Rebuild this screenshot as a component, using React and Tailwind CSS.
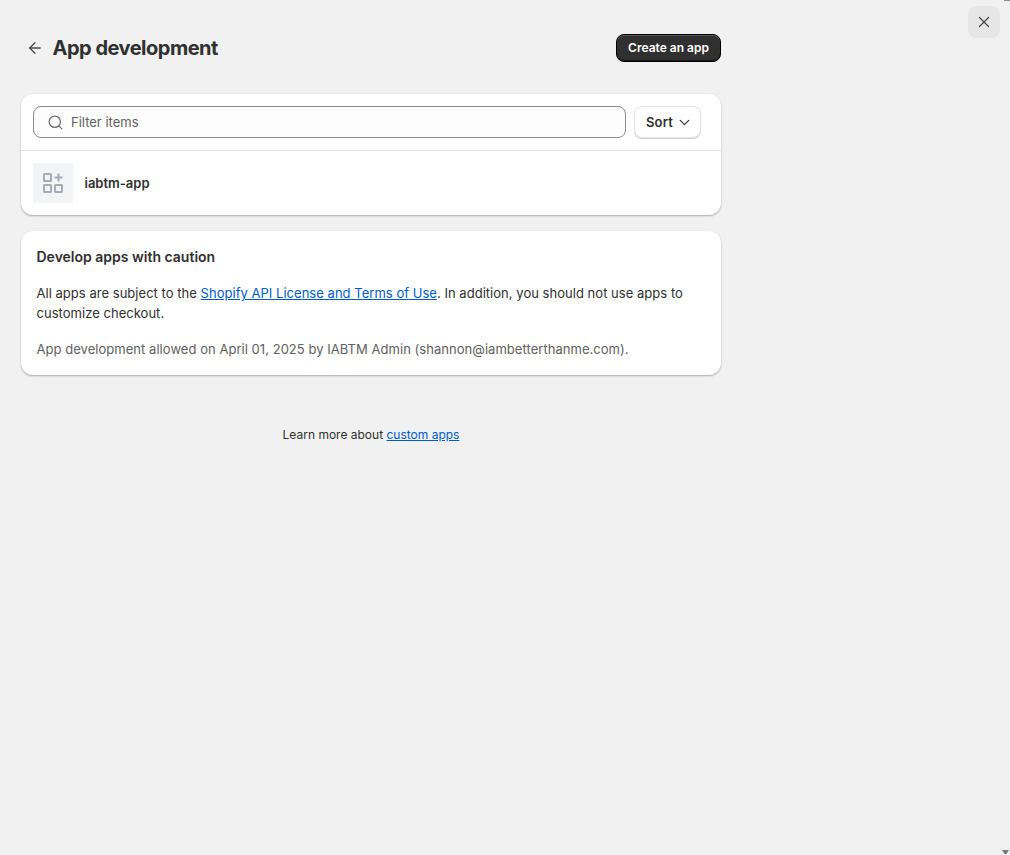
import { ArrowLeft, Search, ChevronDown, X } from 'lucide-react'

const AppIcon = () => (
  <svg width="20" height="20" viewBox="0 0 20 20" fill="none" stroke="#a4acb8" strokeWidth="2">
    <rect x="1" y="1" width="7" height="7" rx="0.5" />
    <rect x="1" y="12" width="7" height="7" rx="0.5" />
    <rect x="12" y="12" width="7" height="7" rx="0.5" />
    <path d="M15.5 0.5v8M11.5 4.5h8" />
  </svg>
)

const App = () => {
  return (
    <div className="relative h-[855px] overflow-hidden bg-[#f1f1f1] font-['Inter',sans-serif] text-[13px] font-normal text-[#303030] flex justify-between pl-[21px] pr-[10px]">
      <div className="w-[700px] pt-[34px]">
        <div className="flex items-center justify-between h-[28px] mb-[32px]">
          <div className="flex items-center">
            <ArrowLeft className="w-[18px] h-[18px] ml-[5px] mr-[8.5px] text-[#4a4a4a]" strokeWidth={1.7} />
            <h1 className="text-[20px] leading-[28px] font-bold tracking-[-0.5px]">App development</h1>
          </div>
          <button className="h-[28px] w-[105px] rounded-lg bg-[#303030] border border-black text-white text-[12px] font-semibold shadow-[inset_0_1px_0_#5a5a5a,inset_0_-1px_0_#1a1a1a]">Create an app</button>
        </div>

        <div className="bg-white rounded-xl shadow-[0_1px_2px_rgba(0,0,0,0.3)] mb-[16px]">
          <div className="flex items-center gap-[8px] pl-[12px] pr-[20px] h-[57px] border-b border-[#e3e3e3]">
            <div className="flex-1 flex items-center h-[32px] rounded-lg border border-[#8a8a8a] bg-[#fdfdfd] pl-[13px]">
              <Search className="w-[17px] h-[17px] text-[#6b6b6b] mr-[7px]" strokeWidth={1.7} />
              <span className="text-[#616161] pt-[1px]">Filter items</span>
            </div>
            <button className="flex items-center justify-center gap-[3px] w-[67px] h-[32px] rounded-lg border border-[#e3e3e3] bg-white font-semibold shadow-[0_1px_0_#d4d4d4] pl-[4px] tracking-[0.2px]">
              <span className="pt-[1px]">Sort</span>
              <ChevronDown className="w-[17px] h-[17px]" strokeWidth={1.7} />
            </button>
          </div>
          <div className="flex items-center h-[64px] pl-[12px]">
            <div className="w-[40px] h-[40px] bg-[#f3f4f6] flex items-center justify-center mr-[11.5px]">
              <AppIcon />
            </div>
            <span className="font-semibold pt-[1px]">iabtm-app</span>
          </div>
        </div>

        <div className="bg-white rounded-xl shadow-[0_1px_2px_rgba(0,0,0,0.3)] pl-[15.5px] pr-[16px] py-[16px] h-[144px]">
          <h2 className="text-[14px] leading-[20px] font-semibold mb-[16px]">Develop apps with caution</h2>
          <p className="leading-[20px] mb-[16px] tracking-[0.03px]">
            All apps are subject to the <a className="text-[#005bd3] underline">Shopify API License and Terms of Use</a>. In addition, you should not use apps to customize checkout.
          </p>
          <p className="leading-[20px] text-[#616161] tracking-[0.04px]">App development allowed on April 01, 2025 by IABTM Admin (shannon@iambetterthanme.com).</p>
        </div>

        <p className="mt-[52px] text-center text-[12px] leading-[16px]">
          Learn more about <a className="text-[#005bd3] underline">custom apps</a>
        </p>
      </div>

      <button className="mt-[6px] w-[32px] h-[32px] rounded-lg bg-[#e6e6e6] flex items-center justify-center text-[#4a4a4a]">
        <X className="w-[18px] h-[18px]" strokeWidth={1.7} />
      </button>

      <div className="absolute right-0 top-0 w-[6px] h-[1px] bg-[#8a8a8a]" />
      <svg className="absolute right-[1px] bottom-[1px]" width="7" height="4" viewBox="0 0 7 4" fill="#7a7a7a">
        <path d="M0 0h7L4.5 4h-2z" />
      </svg>
    </div>
  )
}

export default App
